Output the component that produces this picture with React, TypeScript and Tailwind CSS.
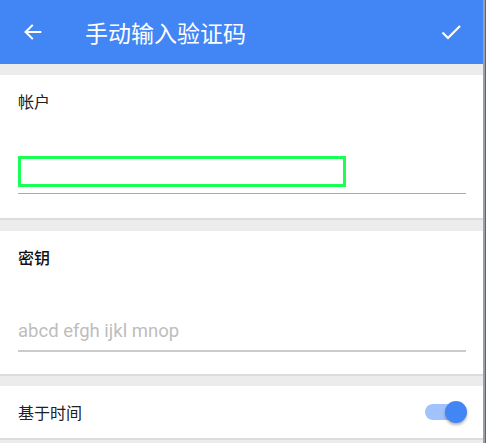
import React from "react";

const cjk = { fontFamily: '"Noto Sans CJK SC", "Noto Sans", sans-serif' };
const roboto = { fontFamily: 'Roboto, "Noto Sans", sans-serif' };

export default function App() {
  return (
    <div className="w-[486px] h-[443px] overflow-hidden flex bg-[#ececec]">
      <div className="flex-1 flex flex-col bg-[#ececec]">
        <header className="h-[64px] bg-[#4285f4] flex items-center text-white shrink-0">
          <div className="w-[64px] flex items-center pl-[22px]">
            <svg width="22" height="22" viewBox="0 0 24 24" fill="none">
              <path d="M20 12H4M4 12l7-7M4 12l7 7" stroke="white" strokeWidth="2.2" strokeLinecap="square" />
            </svg>
          </div>
          <div className="flex-1 pl-[21px] text-[23px] leading-none" style={cjk}>
            手动输入验证码
          </div>
          <div className="w-[64px] flex items-center justify-end pr-[20px]">
            <svg width="24" height="24" viewBox="0 0 24 24" fill="none">
              <path d="M3.5 12.5l5.5 5.5L21 6" stroke="white" strokeWidth="2.2" />
            </svg>
          </div>
        </header>

        <div className="h-[11px] shrink-0" />

        <section className="h-[145px] bg-white border-b-2 border-[#dcdcdc] shrink-0 flex flex-col px-[17px] pt-[14px]">
          <div className="text-[16px] leading-[24px] text-[#212121] pl-[1px]" style={cjk}>帐户</div>
          <div className="mt-[43px] ml-[1px] w-[328px] h-[31px] border-[3px] border-[#19ff55]" />
          <div className="mt-[6px] ml-[1px] h-[1px] bg-[#a8a8a8]" />
        </section>

        <div className="h-[11px] shrink-0" />

        <section className="h-[145px] bg-white border-b-2 border-[#dcdcdc] shrink-0 flex flex-col px-[17px] pt-[14px]">
          <div className="text-[16px] leading-[24px] text-[#111] font-medium pl-[1px]" style={cjk}>密钥</div>
          <div className="mt-[50px] pl-[1px] text-[18.5px] leading-[24px] text-[#bdbdbd]" style={roboto}>
            abcd efgh ijkl mnop
          </div>
          <div className="mt-[7px] ml-[1px] h-[2px] bg-[#cacaca]" />
        </section>

        <div className="h-[10px] shrink-0" />

        <section className="h-[54px] bg-white border-b-2 border-[#dcdcdc] shrink-0 flex items-center justify-between pl-[18px] pr-[18px]">
          <div className="text-[16px] leading-[24px] text-[#212121]" style={cjk}>基于时间</div>
          <div className="relative w-[38px] h-[24px] flex items-center">
            <div className="w-[30px] h-[16px] rounded-full bg-[#a1c2fa] ml-[-2px]" />
            <div className="absolute right-[-2px] top-[1px] w-[22px] h-[22px] rounded-full bg-[#4285f4] shadow-[0_2px_3px_rgba(0,0,0,0.3)]" />
          </div>
        </section>
      </div>
      <div className="w-[2px] bg-[#9aa0a8]" />
      <div className="w-[1px] bg-[#5c6470]" />
    </div>
  );
}
